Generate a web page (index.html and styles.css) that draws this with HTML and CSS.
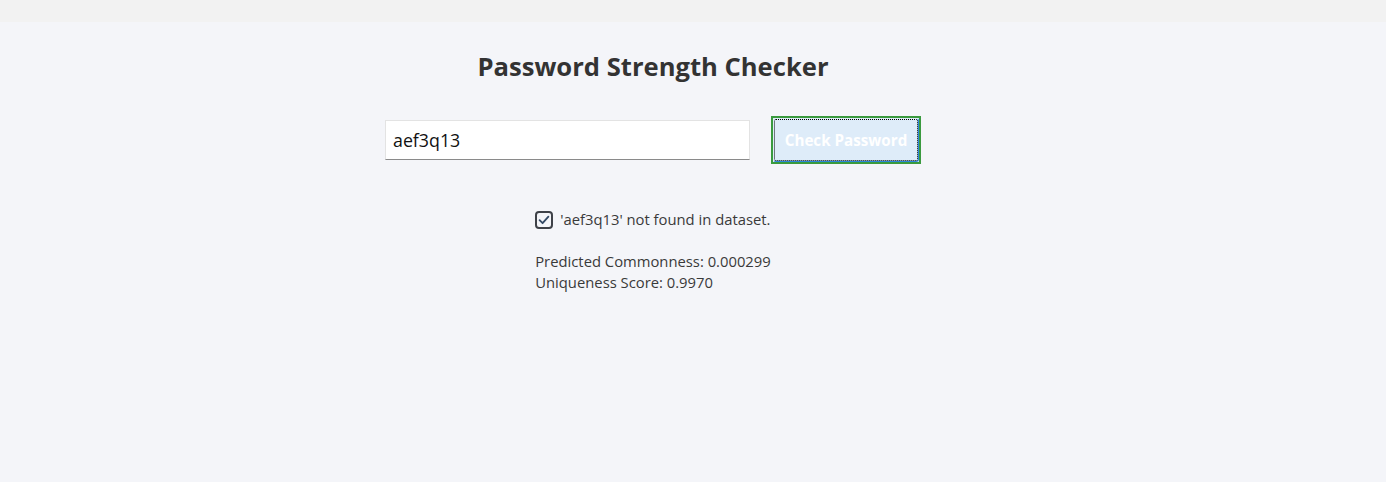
FILE: index.html
```html
<!DOCTYPE html>
<html lang="en">
<head>
<meta charset="utf-8">
<title>Password Strength Checker</title>
<link rel="stylesheet" href="styles.css">
</head>
<body>
<div class="topbar"></div>
<main class="main">
  <h1 class="title">Password Strength Checker</h1>
  <div class="form-row">
    <input class="pw-input" type="text" value="aef3q13">
    <button class="check-btn" type="button"><span class="btn-ring"><span class="btn-focus">Check Password</span></span></button>
  </div>
  <div class="results">
    <div class="found-line">
      <svg class="check-icon" width="18" height="18" viewBox="0 0 18 18" aria-hidden="true">
        <rect x="1" y="1" width="16" height="16" rx="3" ry="3" fill="none" stroke="#3e4148" stroke-width="2"/>
        <path d="M4.6 9.2 L7.6 12.2 L13.4 5.6" fill="none" stroke="#344a66" stroke-width="1.8" stroke-linecap="round" stroke-linejoin="round"/>
      </svg>
      <span>'aef3q13' not found in dataset.</span>
    </div>
    <div class="stats">
      <div>Predicted Commonness: 0.000299</div>
      <div>Uniqueness Score: 0.9970</div>
    </div>
  </div>
</main>
</body>
</html>
```

FILE: styles.css
```css
html, body {
  margin: 0;
  padding: 0;
}

body {
  background: #f4f5f9;
  font-family: "Open Sans", "Noto Sans", "Liberation Sans", sans-serif;
  color: #333333;
  min-height: 482px;
}

.topbar {
  height: 22px;
  background: #f2f2f2;
}

.main {
  display: flex;
  flex-direction: column;
  align-items: center;
  padding-right: 80px;
}

.title {
  margin: 27px 0 0 0;
  font-size: 25.6px;
  line-height: 36px;
  font-weight: 700;
  color: #333333;
}

.form-row {
  display: flex;
  align-items: center;
  gap: 21px;
  margin-top: 31px;
}

.pw-input {
  box-sizing: border-box;
  width: 365px;
  height: 40px;
  border: 1px solid #e3e3e3;
  border-bottom: 1px solid #8a8a8a;
  background: #ffffff;
  padding: 0 7px;
  font-family: "Open Sans", "Noto Sans", sans-serif;
  font-size: 17.8px;
  color: #111111;
  outline: none;
}

.check-btn {
  box-sizing: border-box;
  width: 150px;
  height: 48px;
  padding: 0;
  border: 2px solid #3a9a3f;
  background: #deecf9;
  cursor: pointer;
  display: flex;
}

.btn-ring {
  box-sizing: border-box;
  flex: 1;
  display: flex;
  border: 1px solid #deecf9;
  border-right-color: #2b86d9;
  border-bottom-color: #2b86d9;
  border-radius: 3px;
}

.btn-focus {
  box-sizing: border-box;
  flex: 1;
  display: flex;
  align-items: center;
  justify-content: center;
  border: 1px dotted #000000;
  border-radius: 2px;
  font-family: "Open Sans", "Noto Sans", sans-serif;
  font-size: 15.2px;
  font-weight: 700;
  color: #ffffff;
}

.results {
  margin-top: 45px;
  font-size: 14.8px;
  line-height: 21px;
  color: #3a3a3a;
}

.found-line {
  display: flex;
  align-items: center;
  gap: 7px;
}

.check-icon {
  display: block;
  flex: none;
}

.stats {
  margin-top: 21px;
}
```
